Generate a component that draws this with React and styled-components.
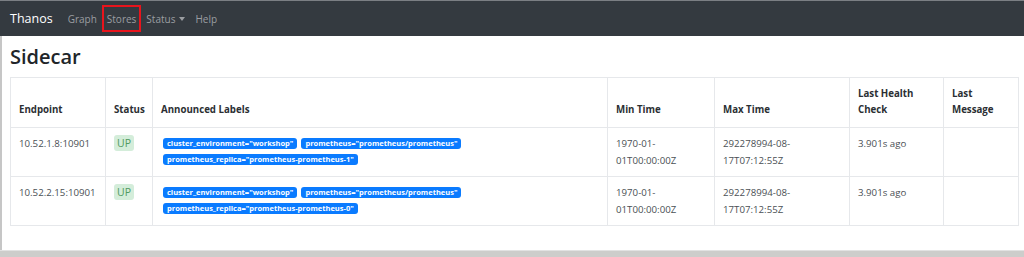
import styled, { createGlobalStyle } from 'styled-components';

const GlobalStyle = createGlobalStyle`
  html, body {
    margin: 0;
    padding: 0;
    background: #ffffff;
  }
  body {
    font-family: "Open Sans", "Noto Sans", "Liberation Sans", sans-serif;
    color: #212529;
  }
`

const stores = [
  {
    endpoint: '10.52.1.8:10901',
    replica: 'prometheus-prometheus-1',
  },
  {
    endpoint: '10.52.2.15:10901',
    replica: 'prometheus-prometheus-0',
  },
]

const columns = [
  { title: 'Endpoint', width: 95 },
  { title: 'Status', width: 47 },
  { title: 'Announced Labels', width: 455 },
  { title: 'Min Time', width: 107 },
  { title: 'Max Time', width: 135 },
  { title: 'Last Health Check', width: 94 },
  { title: 'Last Message', width: 75 },
]

const App = () => {
  return (
    <Screen>
      <GlobalStyle />
      <Navbar>
        <Brand>Thanos</Brand>
        <NavList>
          <NavLink>Graph</NavLink>
          <NavLink highlighted>Stores</NavLink>
          <NavLink>
            Status <Caret />
          </NavLink>
          <NavLink>Help</NavLink>
        </NavList>
      </Navbar>
      <Content>
        <Title>Sidecar</Title>
        <Table>
          <colgroup>
            {columns.map((col) => (
              <col key={col.title} style={{ width: col.width }} />
            ))}
          </colgroup>
          <thead>
            <tr>
              {columns.map((col) => (
                <HeadCell key={col.title}>{col.title}</HeadCell>
              ))}
            </tr>
          </thead>
          <tbody>
            {stores.map((store) => (
              <tr key={store.endpoint}>
                <Cell>{store.endpoint}</Cell>
                <Cell>
                  <StatusBadge>UP</StatusBadge>
                </Cell>
                <Cell>
                  <Labels>
                    <LabelBadge>cluster_environment="workshop"</LabelBadge>
                    <LabelBadge>prometheus="prometheus/prometheus"</LabelBadge>
                    <LabelBadge>prometheus_replica="{store.replica}"</LabelBadge>
                  </Labels>
                </Cell>
                <Cell>1970-01-01T00:00:00Z</Cell>
                <Cell>292278994-08-17T07:12:55Z</Cell>
                <Cell>3.901s ago</Cell>
                <Cell></Cell>
              </tr>
            ))}
          </tbody>
        </Table>
      </Content>
      <BottomStrip />
    </Screen>
  );
}

export default App;

const Screen = styled.div`
  display: flex;
  flex-direction: column;
  width: 1024px;
  height: 257px;
  overflow: hidden;
`

const Navbar = styled.nav`
  display: flex;
  align-items: center;
  height: 36px;
  flex-shrink: 0;
  padding: 0 10px;
  background-color: #343a40;
  border-top: 1px solid #7b7f84;
  box-sizing: border-box;
`

const Brand = styled.span`
  color: #ffffff;
  font-size: 12.5px;
  margin-right: 10px;
`

const NavList = styled.div`
  display: flex;
  align-items: center;
`

const NavLink = styled.span`
  display: flex;
  align-items: center;
  height: 27px;
  padding: 0 5px;
  font-size: 10px;
  color: #9b9ea2;
  outline: ${(p) => (p.highlighted ? '2px solid #e8141c' : 'none')};
  outline-offset: -2px;
  box-sizing: border-box;
`

const Caret = styled.span`
  display: inline-block;
  margin-left: 4px;
  width: 0;
  height: 0;
  border-left: 3.5px solid transparent;
  border-right: 3.5px solid transparent;
  border-top: 4px solid #9b9ea2;
`

const Content = styled.main`
  flex: 1;
  padding: 6px 6px 0 8px;
  border-left: 2px solid #c6c6c6;
`

const Title = styled.h1`
  margin: 0 0 5px;
  font-size: 20px;
  font-weight: 600;
  line-height: 30px;
  color: #212529;
`

const Table = styled.table`
  width: 1008px;
  table-layout: fixed;
  border-collapse: collapse;
  border: 1px solid #e6e8eb;
  font-size: 9.7px;
`

const HeadCell = styled.th`
  text-align: left;
  vertical-align: bottom;
  font-weight: 700;
  line-height: 16px;
  padding: 7px 8px 9px;
  height: 33px;
  border: 1px solid #e6e8eb;
  color: #2b2f33;
`

const Cell = styled.td`
  vertical-align: top;
  line-height: 17px;
  padding: 7px 7px 7px 8px;
  height: 32px;
  border: 1px solid #e6e8eb;
  color: #4a4f54;
  word-break: break-word;
`

const StatusBadge = styled.span`
  display: inline-block;
  padding: 0 3px;
  font-size: 10.5px;
  line-height: 16px;
  border-radius: 3px;
  background-color: #d4edda;
  color: #4f9a60;
`

const Labels = styled.div`
  display: flex;
  flex-wrap: wrap;
  gap: 5px 4px;
  padding-top: 3px;
  padding-left: 2px;
`

const LabelBadge = styled.span`
  display: inline-block;
  padding: 0 4px;
  font-size: 7.5px;
  font-weight: 700;
  line-height: 11px;
  border-radius: 3px;
  background-color: #0a7bff;
  color: #ffffff;
  white-space: nowrap;
`

const BottomStrip = styled.div`
  height: 6px;
  flex-shrink: 0;
  background-color: #cdcdcb;
  border-top: 1px solid #e2e2e2;
`
